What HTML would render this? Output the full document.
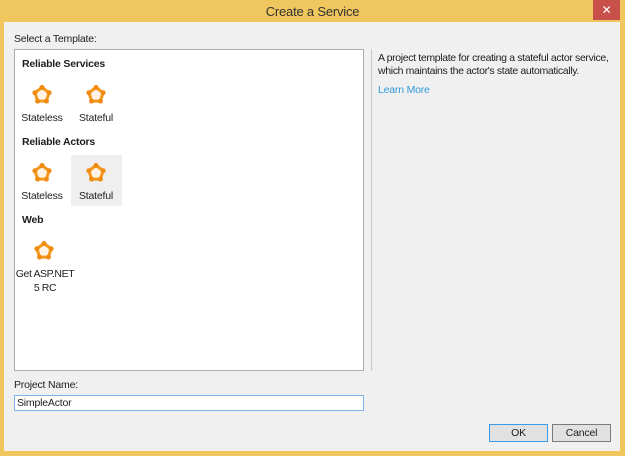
<!DOCTYPE html>
<html><head><style>
*{margin:0;padding:0;box-sizing:border-box}
body{width:625px;height:456px;background:#f0c75e;font-family:"Liberation Sans",sans-serif;font-size:10.5px;letter-spacing:-0.2px;color:#1e1e1e;position:relative;overflow:hidden}
.a{position:absolute;white-space:nowrap}
.title{left:0;top:4px;width:625px;text-align:center;font-size:13px;color:#333}
.close{left:593px;top:0;width:27px;height:20px;background:#c7504b;color:#fff;text-align:center;font-size:12px;line-height:20px}
.cont{left:4px;top:22px;width:616px;height:429px;background:#f0f0f0}
.list{left:14px;top:49px;width:350px;height:322px;background:#fff;border:1px solid #abadb3}
.h{font-weight:bold}
.lbl{width:54px;text-align:center}
.btn{height:18px;width:59px;background:#e1e1e1;border:1px solid #adadad;text-align:center;line-height:16px}
</style></head><body>
<div class="a title">Create a Service</div>
<div class="a close">✕</div>
<div class="a cont"></div>
<div class="a" style="left:14px;top:33px">Select a Template:</div>
<div class="a list"></div>
<div class="a" style="left:371px;top:49px;width:1px;height:322px;background:#c8c8c8"></div>
<div class="a" style="left:378px;top:52px;line-height:13px;letter-spacing:-0.35px">A project template for creating a stateful actor service,<br>which maintains the actor's state automatically.</div>
<div class="a" style="left:378px;top:84px;color:#3399dd">Learn More</div>
<div class="a h" style="left:22px;top:58px">Reliable Services</div>
<div class="a h" style="left:22px;top:136px">Reliable Actors</div>
<div class="a h" style="left:22px;top:214px">Web</div>
<div class="a" style="left:71px;top:155px;width:51px;height:51px;background:#efefef"></div>
<svg class="a" style="left:0;top:0" width="625" height="456">
<defs><g id="ic"><polygon points="0,-7.5 7.1,-2.3 4.4,6.1 -4.4,6.1 -7.1,-2.3" fill="#fef3e4" stroke="#f39a1e" stroke-width="3"/><g fill="#f08a10"><circle cx="0" cy="-7.5" r="2.5"/><circle cx="7.1" cy="-2.3" r="2.5"/><circle cx="4.4" cy="6.1" r="2.5"/><circle cx="-4.4" cy="6.1" r="2.5"/><circle cx="-7.1" cy="-2.3" r="2.5"/></g></g></defs>
<use href="#ic" x="42" y="95"/><use href="#ic" x="96" y="95"/>
<use href="#ic" x="42" y="173"/><use href="#ic" x="96" y="173"/>
<use href="#ic" x="44" y="251"/>
</svg>
<div class="a lbl" style="left:15px;top:112px">Stateless</div>
<div class="a lbl" style="left:69px;top:112px">Stateful</div>
<div class="a lbl" style="left:15px;top:190px">Stateless</div>
<div class="a lbl" style="left:69px;top:190px">Stateful</div>
<div class="a lbl" style="left:14px;top:267px;width:62px;line-height:14px;letter-spacing:-0.4px">Get ASP.NET<br>5 RC</div>
<div class="a" style="left:14px;top:379px">Project Name:</div>
<div class="a" style="left:14px;top:395px;width:350px;height:16px;background:#fff;border:1px solid #7eb4ea;padding-left:2px;line-height:14px">SimpleActor</div>
<div class="a btn" style="left:489px;top:424px;border-color:#3c9be6">OK</div>
<div class="a btn" style="left:552px;top:424px;border-color:#7a7a7a">Cancel</div>
</body></html>
